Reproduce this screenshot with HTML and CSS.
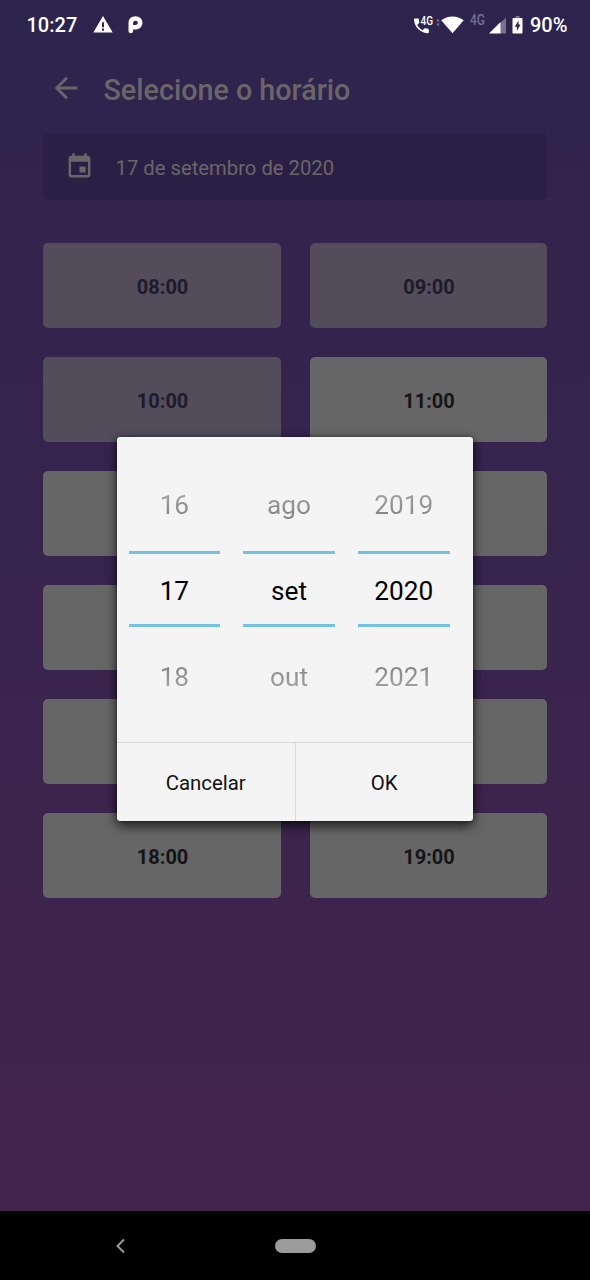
FILE: index.html
```html
<!DOCTYPE html>
<html lang="pt-BR">
<head>
<meta charset="utf-8">
<title>Selecione o horário</title>
<link rel="stylesheet" href="styles.css">
</head>
<body>
<div class="screen">
  <header class="status">
    <span class="clock">10:27</span>
    <svg class="warning" width="20" height="18" viewBox="0 0 20 18"><path fill="#fff" fill-rule="evenodd" d="M10 0 19.700 16.500H.3zM9 6.200v5h2v-5zM9 12.500v2.200h2v-2.200z"/></svg>
    <svg class="parking" width="15" height="18" viewBox="0 0 15 18"><path fill="none" stroke="#fff" stroke-width="4.600" stroke-linecap="round" stroke-linejoin="round" d="M2.800 15V6.800C2.800 4 4.700 2.500 7.500 2.500S12.200 4.200 12.200 6.800 10.300 11.200 7.800 11.200H4"/></svg>
    <div class="signals">
      <svg width="93" height="24" viewBox="0 0 93 24">
        <path fill="#fff" d="M1.800 5.500h3.300c.5 0 .8.3.8.8 0 1 .1 2 .4 2.900.1.300 0 .6-.2.800l-1.800 1.900c1.200 2.300 3 4.100 5.300 5.300l1.700-1.800c.200-.200.500-.300.800-.200 1 .3 1.900.5 2.900.500.500 0 .8.300.8.800v3c0 .500-.300.800-.8.800C7.700 20.300 1 13.600 1 6.300c0-.500.300-.8.800-.8z"/>
        <text class="net-small" x="7.500" y="12" textLength="12.500" lengthAdjust="spacingAndGlyphs">4G</text>
        <path fill="#777092" d="m25 5.500 1.700 3h-3.400zM25 13.500l1.700-3h-3.400z"/>
        <path fill="#fff" d="M39.500 20.200 28.200 7.300c6.500-5.200 16-5.200 22.500 0z"/>
        <text class="net" x="57" y="12" textLength="15" lengthAdjust="spacingAndGlyphs">4G</text>
        <path fill="#777092" d="M93 4.500v16h-6v-10z"/>
        <path fill="#fff" d="M87.500 9v11.500H76z"/>
      </svg>
      <svg class="battery" width="12" height="18" viewBox="0 0 12 18"><path fill="#777092" d="M3.500 0h4v2h-4z"/><path fill="#fff" fill-rule="evenodd" d="M1.500 2h8c.6 0 1 .4 1 1v13.500c0 .6-.4 1-1 1h-8c-.6 0-1-.4-1-1V3c0-.6.4-1 1-1zM6.500 4.500 2.700 10.700h2.200v4.200l3.600-6.300H6.500z"/></svg>
      <span class="percent">90%</span>
    </div>
  </header>

  <div class="title-bar">
    <svg class="back" width="34" height="34" viewBox="0 0 24 24"><path fill="#6a6668" d="M20 11H7.830l5.590-5.590L12 4l-8 8 8 8 1.410-1.410L7.830 13H20v-2z"/></svg>
    <h1 class="title">Selecione o horário</h1>
  </div>

  <div class="date-field">
    <svg class="calendar" width="29" height="29" viewBox="0 0 24 24"><path fill="#6a6668" d="M17 12h-5v5h5v-5zM16 1v2H8V1H6v2H5c-1.110 0-1.990.9-1.990 2L3 19c0 1.100.890 2 2 2h14c1.100 0 2-.9 2-2V5c0-1.100-.9-2-2-2h-1V1h-2zm3 18H5V8h14v11z"/></svg>
    <span class="date">17 de setembro de 2020</span>
  </div>

  <main class="slots">
    <div class="slot past">08:00</div>
    <div class="slot past">09:00</div>
    <div class="slot past">10:00</div>
    <div class="slot">11:00</div>
    <div class="slot"></div>
    <div class="slot"></div>
    <div class="slot"></div>
    <div class="slot"></div>
    <div class="slot"></div>
    <div class="slot"></div>
    <div class="slot">18:00</div>
    <div class="slot">19:00</div>
  </main>

  <nav class="nav">
    <svg class="nav-back" width="12" height="16" viewBox="0 0 12 16"><path d="M10 1.500 3.500 8l6.500 6.500" fill="none" stroke="#9b9b9b" stroke-width="2"/></svg>
    <span class="home"></span>
  </nav>

  <div class="dialog">
    <div class="wheels">
      <div class="wheel"><span class="item before">16</span><span class="item current">17</span><span class="item after">18</span></div>
      <div class="wheel"><span class="item before">ago</span><span class="item current">set</span><span class="item after">out</span></div>
      <div class="wheel"><span class="item before">2019</span><span class="item current">2020</span><span class="item after">2021</span></div>
    </div>
    <div class="actions">
      <button class="action">Cancelar</button>
      <button class="action">OK</button>
    </div>
  </div>
</div>
</body>
</html>
```
FILE: styles.css
```css
* { box-sizing: border-box; }
body { margin: 0; font-family: Roboto, "Noto Sans", sans-serif; }
.screen {
  position: relative;
  display: flex;
  flex-direction: column;
  width: 590px;
  height: 1280px;
  overflow: hidden;
  background: linear-gradient(#2d244d, #44244d 1211px);
}
.status {
  display: flex;
  align-items: center;
  height: 50px;
  padding: 0 22px 0 26.500px;
  color: #fff;
  font-size: 20px;
  font-weight: 500;
}
.clock { width: 51px; }
.warning { margin-left: 15.500px; }
.parking { margin-left: 15px; }
.signals { display: flex; align-items: center; margin-left: auto; }
.signals text { font-family: Roboto, sans-serif; font-weight: 500; }
.net-small { font-size: 12px; fill: #fff; }
.net { font-size: 14px; fill: #777092; }
.battery { margin-left: 6px; }
.percent { width: 38px; margin-left: 6px; white-space: nowrap; }
.title-bar {
  display: flex;
  align-items: center;
  height: 76px;
  padding-left: 48.500px;
}
.title {
  margin: 3px 0 0 21px;
  color: #6a6668;
  font-size: 28.700px;
  font-weight: 500;
  line-height: 32px;
}
.date-field {
  display: flex;
  align-items: center;
  height: 66px;
  margin: 8px 43px 0;
  padding-left: 21.500px;
  border-radius: 5px;
  background: #2a2045;
}
.calendar { margin-bottom: 2px; }
.date { margin: 2px 0 0 22px; color: #6a6668; font-size: 20.250px; }
.slots {
  display: grid;
  grid-template-columns: 1fr 1fr;
  grid-auto-rows: 85px;
  gap: 29px;
  margin: 43px 42.800px 0 43.400px;
}
.slot {
  display: flex;
  align-items: center;
  justify-content: center;
  padding: 2px 0 0 1px;
  border-radius: 5px;
  background: #666;
  color: #151416;
  font-size: 20px;
  font-weight: 700;
}
.slot.past { background: #524c5b; color: #201a2b; }
.nav {
  display: flex;
  align-items: center;
  height: 69px;
  margin-top: auto;
  padding-left: 114px;
  background: #000;
}
.home { width: 41px; height: 14px; margin-left: 149px; border-radius: 7px; background: #9b9b9b; }
.dialog {
  position: absolute;
  left: 117px;
  top: 437px;
  width: 356px;
  height: 384px;
  border-radius: 3px;
  background: #f4f4f4;
  box-shadow: 0 5px 12px rgba(0, 0, 0, .7), 0 0 4px rgba(0, 0, 0, .4);
  overflow: hidden;
}
.wheels {
  display: flex;
  gap: 23px;
  height: 305px;
  padding: 25px 0 0 11.500px;
}
.wheel { display: flex; flex-direction: column; width: 91.700px; }
.item {
  display: flex;
  align-items: center;
  justify-content: center;
  height: 86px;
  color: #000;
  font-size: 26.200px;
}
.current {
  height: 76px;
  margin: 3px 0 7px;
  padding-top: 4px;
  border-top: 3px solid #74c2e1;
  border-bottom: 3px solid #74c2e1;
}
.item.before, .item.after {
  color: transparent;
  background-clip: text;
  -webkit-background-clip: text;
}
.item.before { background-image: linear-gradient(#aaa 30%, #777 75%); }
.item.after { background-image: linear-gradient(#777 25%, #aaa 70%); }
.actions { display: flex; height: 79px; border-top: 1.500px solid #dadada; }
.action {
  flex: 1;
  padding: 1px 0 0;
  border: 0;
  background: none;
  color: #111;
  font-family: inherit;
  font-size: 20.400px;
}
.action + .action { border-left: 1.500px solid #dadada; }
```
